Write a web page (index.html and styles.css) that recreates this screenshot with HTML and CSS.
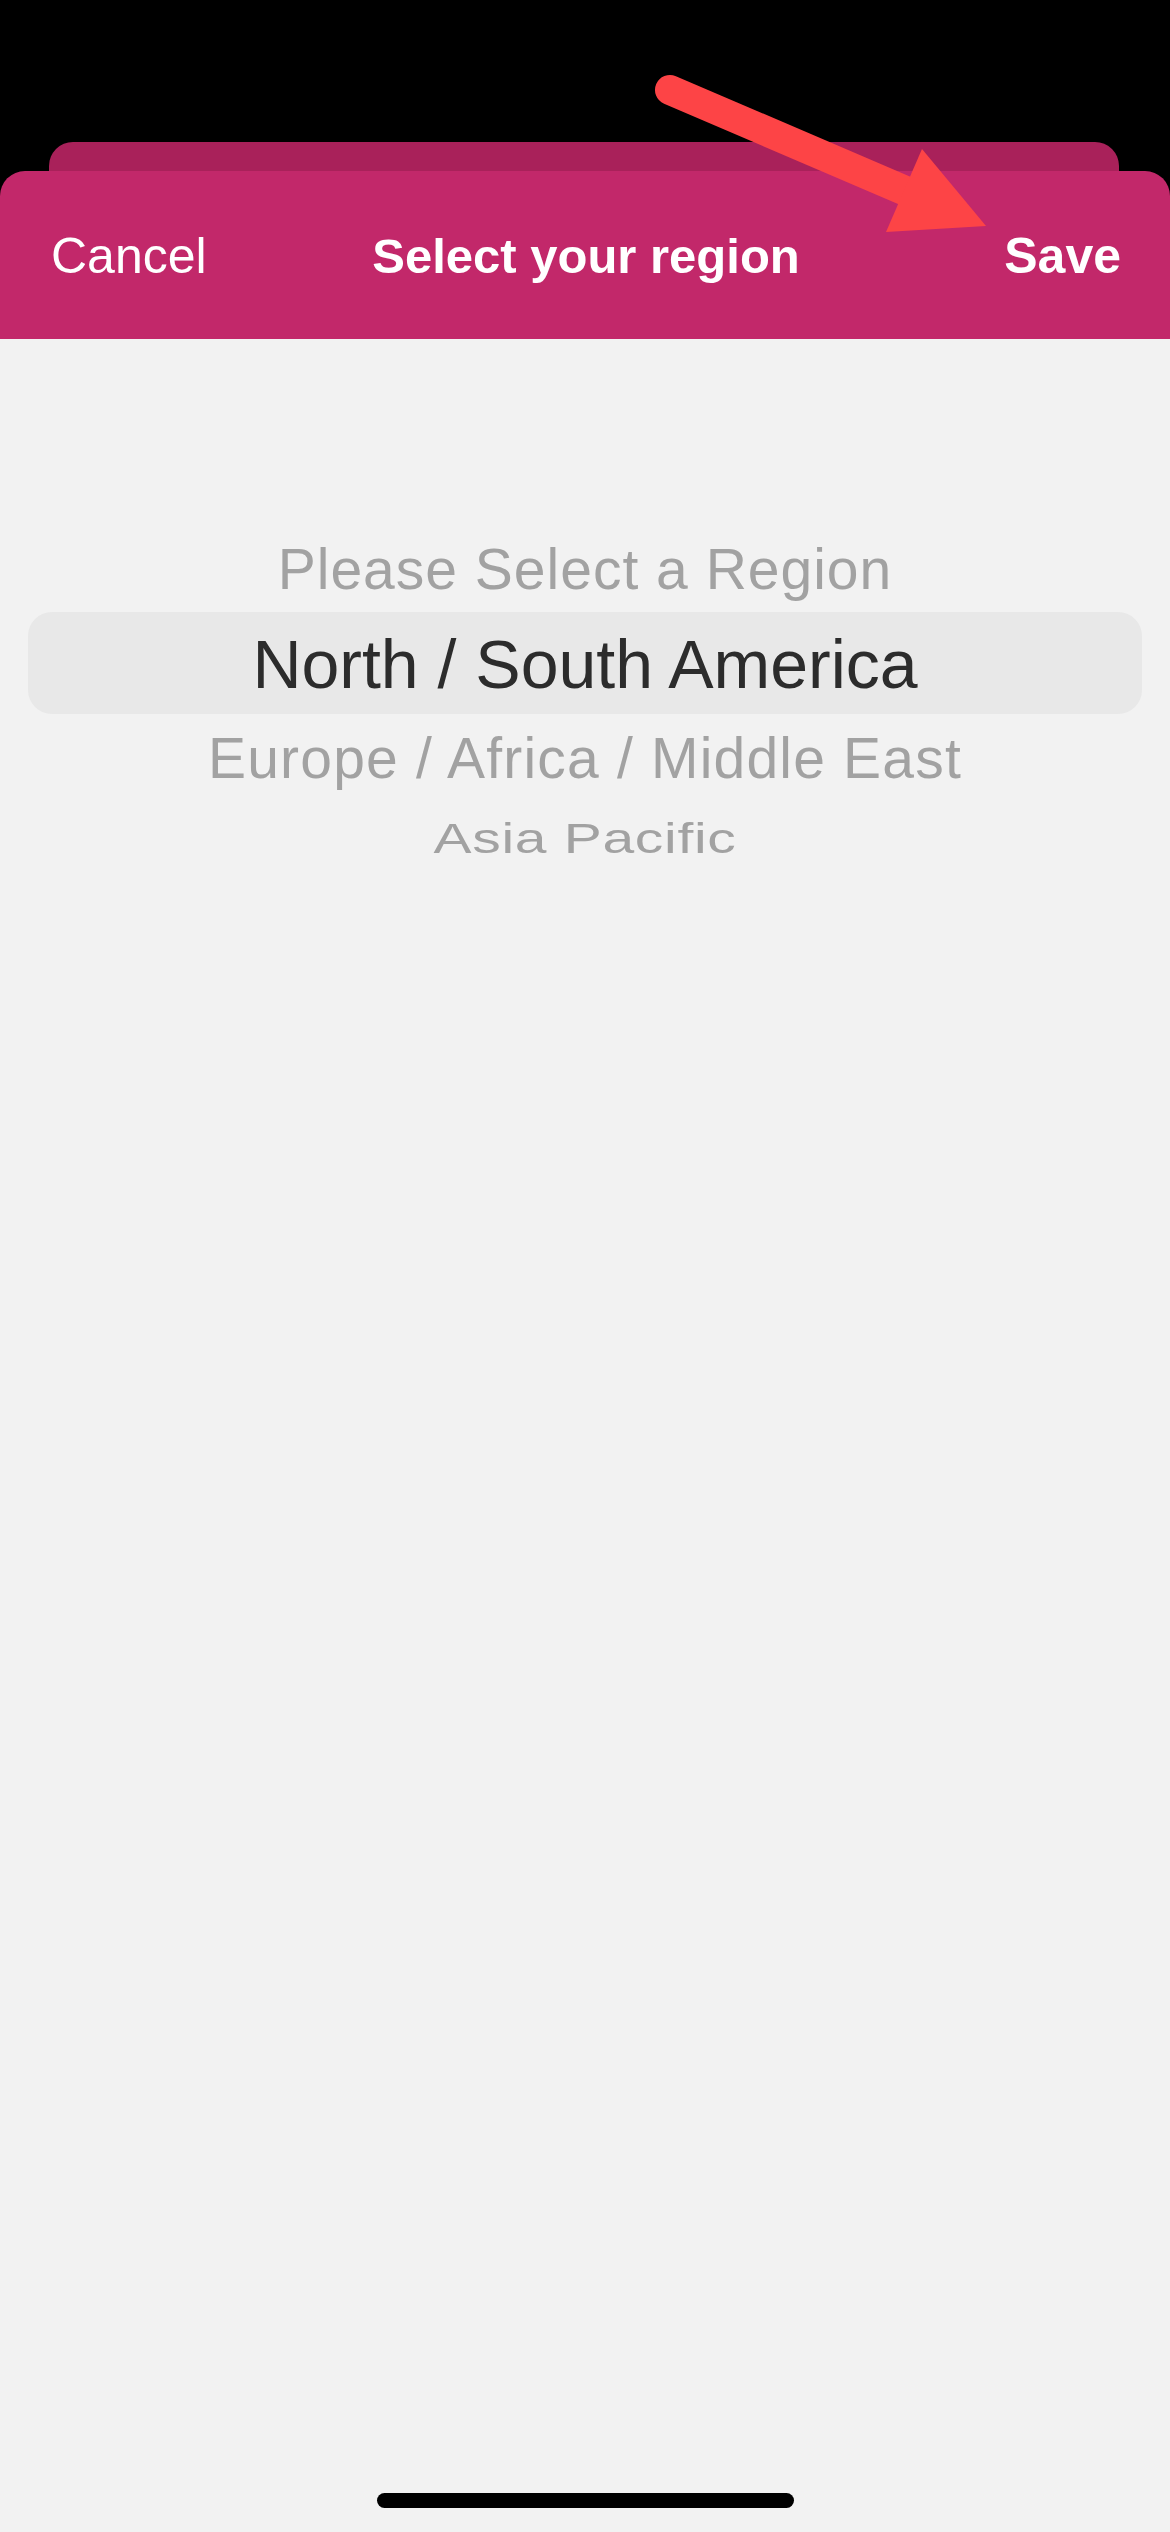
FILE: index.html
```html
<!DOCTYPE html>
<html lang="en">
<head>
<meta charset="utf-8">
<title>Select your region</title>
<link rel="stylesheet" href="styles.css">
</head>
<body>
<div class="screen">
  <div class="sheet-stack">
    <div class="back-card"></div>
    <header class="navbar">
      <span class="nav-btn nav-left">Cancel</span>
      <span class="nav-title">Select your region</span>
      <span class="nav-btn nav-right">Save</span>
    </header>
  </div>
  <main class="content">
    <div class="picker">
      <div class="row row-gray">Please Select a Region</div>
      <div class="row-selected">North / South America</div>
      <div class="row row-gray row-below">Europe / Africa / Middle East</div>
      <div class="row row-gray row-far">Asia Pacific</div>
    </div>
  </main>
  <footer class="home-area"><div class="home-indicator"></div></footer>
  <svg class="annotation" width="1170" height="260" viewBox="0 0 1170 260">
    <line x1="670" y1="90" x2="915" y2="195" stroke="#fd4446" stroke-width="30" stroke-linecap="round"/>
    <polygon points="922,149 986,226 886,232" fill="#fd4446"/>
  </svg>
</div>
</body>
</html>
```
FILE: styles.css
```css
html, body {
  margin: 0;
  padding: 0;
}
body {
  background: #f2f2f2;
  font-family: "Liberation Sans", Arial, sans-serif;
}
.screen {
  position: relative;
  width: 1170px;
  min-height: 2532px;
  display: flex;
  flex-direction: column;
  background: #f2f2f2;
}
.sheet-stack {
  background: #000;
  padding-top: 142px;
  display: flex;
  flex-direction: column;
}
.back-card {
  height: 29px;
  margin: 0 51px 0 49px;
  background: #a9215a;
  border-radius: 24px 24px 0 0;
}
.navbar {
  height: 168px;
  box-sizing: border-box;
  padding: 55px 49px 0 51px;
  background: #c2286a;
  border-radius: 25px 25px 0 0;
  display: grid;
  grid-template-columns: 1fr auto 1fr;
  align-items: start;
  color: #fff;
  font-size: 50px;
  line-height: 60px;
}
.nav-left {
  justify-self: start;
}
.nav-right {
  justify-self: end;
  font-weight: bold;
}
.nav-title {
  font-weight: bold;
  font-size: 49px;
}
.content {
  flex: 1;
}
.picker {
  padding-top: 196px;
  display: flex;
  flex-direction: column;
  align-items: stretch;
  text-align: center;
}
.row {
  height: 68px;
  font-size: 57px;
  line-height: 68px;
  white-space: nowrap;
}
.row-gray {
  color: #a2a2a2;
  letter-spacing: 1px;
}
.row-selected {
  margin: 9px 28px 0;
  height: 102px;
  box-sizing: border-box;
  padding-top: 2px;
  background: #e8e8e8;
  border-radius: 24px;
  font-size: 68px;
  line-height: 100px;
  color: #2c2c2c;
  white-space: nowrap;
}
.row-below {
  margin-top: 10px;
  letter-spacing: 1.2px;
}
.row-far {
  margin-top: 20px;
  transform: scaleY(0.76);
  transform-origin: center top;
  letter-spacing: 0.7px;
}
.home-area {
  height: 15px;
  display: flex;
  justify-content: center;
  align-items: flex-start;
  padding-bottom: 24px;
}
.home-indicator {
  width: 417px;
  height: 15px;
  border-radius: 8px;
  background: #000;
}
.annotation {
  position: absolute;
  left: 0;
  top: 0;
}
```
